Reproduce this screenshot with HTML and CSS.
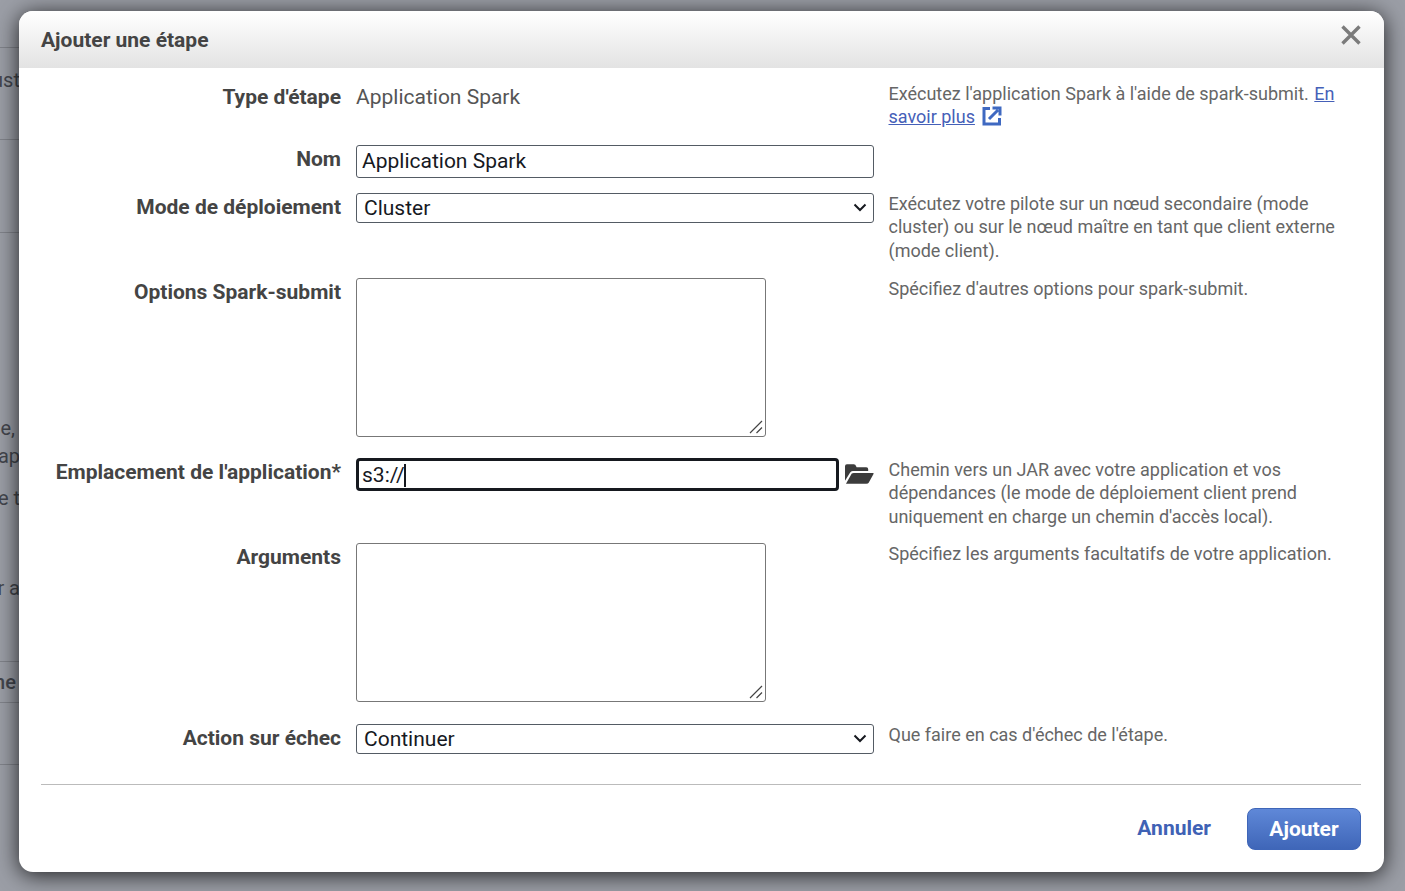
FILE: index.html
```html
<!DOCTYPE html>
<html lang="fr">

<head>
    <meta charset="UTF-8">
    <title>Ajouter une étape</title>
    <link rel="stylesheet" href="styles.css">
</head>

<body>

    <div class="backdrop">
        <div class="bg-row bg-a"></div>
        <div class="bg-row bg-b"><span class="bg-text bg-ust">clust</span></div>
        <div class="bg-row bg-c"></div>
        <div class="bg-row bg-d">
            <span class="bg-text bg-e">une,</span>
            <span class="bg-text bg-ap">d'ap</span>
            <span class="bg-text bg-t">de t</span>
            <span class="bg-text bg-ra">pour a</span>
        </div>
        <div class="bg-row bg-f"><span class="bg-text bg-ne">Nome</span></div>
        <div class="bg-row bg-g"></div>
    </div>

    <div class="modal">
        <div class="modal-header">
            <h2>Ajouter une étape</h2>
            <svg class="close" viewBox="0 0 20 20" width="20" height="20">
                <path d="M1.500 1.500 L18.500 18.500 M18.500 1.500 L1.500 18.500" stroke="#7b7b7b" stroke-width="3.400" fill="none" />
            </svg>
        </div>

        <div class="modal-body">
            <div class="form-row row-type">
                <label>Type d'étape</label>
                <div class="control static">Application Spark</div>
                <p class="help">Exécutez l'application Spark à l'aide de spark-submit. <a href="#">En savoir plus</a>
                    <svg class="ext" viewBox="0 0 20 20" width="20" height="20">
                        <path d="M8 2.500 H2 V18 H17.500 V12" stroke="#3f69c1" stroke-width="3" fill="none" />
                        <path d="M7 13 L16 4 M10.500 2 H18 V9.500" stroke="#3f69c1" stroke-width="3" fill="none" />
                    </svg>
                </p>
            </div>

            <div class="form-row row-name">
                <label>Nom</label>
                <div class="control"><input class="text-input" type="text" value="Application Spark"></div>
                <p class="help"></p>
            </div>

            <div class="form-row row-mode">
                <label>Mode de déploiement</label>
                <div class="control select-wrap">
                    <select class="select-input"><option>Cluster</option></select>
                    <svg class="chevron" viewBox="0 0 14 9" width="14" height="9">
                        <path d="M1.500 1.500 L7 7 L12.500 1.500" stroke="#16191f" stroke-width="2" fill="none" />
                    </svg>
                </div>
                <p class="help">Exécutez votre pilote sur un nœud secondaire (mode cluster) ou sur le nœud maître en tant que client externe (mode client).</p>
            </div>

            <div class="form-row row-options">
                <label>Options Spark-submit</label>
                <div class="control area-wrap">
                    <textarea class="area"></textarea>
                    <svg class="grip" viewBox="0 0 14 14" width="14" height="14">
                        <path d="M1 13 L13 1 M7.500 13 L13 7.500" stroke="#444" stroke-width="1.200" fill="none" />
                    </svg>
                </div>
                <p class="help">Spécifiez d'autres options pour spark-submit.</p>
            </div>

            <div class="form-row row-location">
                <label>Emplacement de l'application*</label>
                <div class="control location">
                    <div class="focused">s3://<span class="caret"></span></div>
                    <svg class="folder" viewBox="0 0 30 22" width="30" height="22">
                        <path d="M0 18 V3 Q0 1 2 1 H9 Q11 1 11.500 3 L12 4 H22 Q24 4 24 6 V8 H8 Q6 8 5 10 Z" fill="#3c3c3c" />
                        <path d="M1 21 L7 10.500 Q7.500 10 9 10 H29 Q30 10 29.500 11 L24.500 20 Q24 21 22 21 Z" fill="#3c3c3c" />
                    </svg>
                </div>
                <p class="help">Chemin vers un JAR avec votre application et vos dépendances (le mode de déploiement client prend uniquement en charge un chemin d'accès local).</p>
            </div>

            <div class="form-row row-args">
                <label>Arguments</label>
                <div class="control area-wrap">
                    <textarea class="area"></textarea>
                    <svg class="grip" viewBox="0 0 14 14" width="14" height="14">
                        <path d="M1 13 L13 1 M7.500 13 L13 7.500" stroke="#444" stroke-width="1.200" fill="none" />
                    </svg>
                </div>
                <p class="help">Spécifiez les arguments facultatifs de votre application.</p>
            </div>

            <div class="form-row row-action">
                <label>Action sur échec</label>
                <div class="control select-wrap">
                    <select class="select-input"><option>Continuer</option></select>
                    <svg class="chevron" viewBox="0 0 14 9" width="14" height="9">
                        <path d="M1.500 1.500 L7 7 L12.500 1.500" stroke="#16191f" stroke-width="2" fill="none" />
                    </svg>
                </div>
                <p class="help">Que faire en cas d'échec de l'étape.</p>
            </div>
        </div>

        <div class="modal-footer">
            <a class="cancel" href="#">Annuler</a>
            <button class="add">Ajouter</button>
        </div>
    </div>

</body>

</html>
```

FILE: styles.css
```css
* {
    box-sizing: border-box;
}

html,
body {
    margin: 0;
    height: 100%;
    overflow: hidden;
}

body {
    font-family: Roboto, sans-serif;
    background-color: #9b9ea6;
    color: #444;
}

/* page behind the dialog */
.backdrop {
    width: 19px;
    height: 891px;
    overflow: hidden;
    color: #43464d;
    font-size: 20px;
}

.bg-row {
    border-bottom: 1px solid #80838a;
    position: relative;
}

.bg-a {
    height: 48px;
}

.bg-b {
    height: 92px;
}

.bg-c {
    height: 93px;
}

.bg-d {
    height: 429px;
}

.bg-f {
    height: 41px;
}

.bg-g {
    height: 62px;
}

.bg-text {
    position: absolute;
    right: -1px;
    white-space: nowrap;
    line-height: 24px;
}

.bg-ust {
    top: 20px;
    right: -1px;
}

.bg-e {
    top: 183px;
    right: 4px;
}

.bg-ap {
    top: 211px;
}

.bg-t {
    top: 253px;
}

.bg-ra {
    top: 343px;
}

.bg-ne {
    top: 8px;
    right: 3px;
    font-weight: 500;
}

/* dialog */
.modal {
    position: absolute;
    left: 19px;
    top: 11px;
    width: 1365px;
    height: 861px;
    background-color: #fff;
    border-radius: 14px;
    box-shadow: 0 3px 22px rgba(0, 0, 0, 0.8);
    overflow: hidden;
}

.modal-header {
    height: 57px;
    padding: 0 22px;
    display: flex;
    align-items: center;
    justify-content: space-between;
    background: linear-gradient(#fff, #e3e3e3);
}

.modal-header h2 {
    margin: 0;
    padding-top: 1px;
    font-size: 21px;
    font-weight: 700;
    color: #444;
}

.close {
    margin: -9px 1px 0 0;
}

.modal-body {
    padding: 0 22px;
}

.form-row {
    display: grid;
    grid-template-columns: 300px 518px 1fr;
    column-gap: 15px;
}

.form-row label {
    font-size: 21px;
    font-weight: 700;
    line-height: 24px;
    text-align: right;
    color: #444;
    padding-top: 2px;
}

.control {
    font-size: 21px;
}

.static {
    line-height: 24px;
    padding-top: 4px;
    color: #555;
}

.help {
    margin: -1.250px 0 0 -0.5px;
    font-size: 18px;
    line-height: 23.500px;
    color: #666;
}

.help a {
    color: #4560b8;
    margin-left: 1px;
}

.ext {
    vertical-align: -3px;
    margin-left: 3px;
}

.row-type {
    height: 77px;
    padding-top: 13px;
}

.row-type label {
    padding-top: 4px;
}

.row-type .help {
    margin-top: 1px;
    line-height: 23px;
}

.row-name {
    height: 48px;
}

.row-mode {
    height: 85px;
}

.row-options {
    height: 180px;
}

.row-location {
    height: 85px;
}

.row-location .help {
    margin-top: -0.250px;
}

.row-args {
    height: 181px;
}

.row-action {
    height: 60px;
}

.text-input,
.select-input {
    display: block;
    width: 518px;
    font-family: Roboto, sans-serif;
    font-size: 21px;
    color: #16191f;
    background-color: #fff;
    border: 1px solid #545b64;
    border-radius: 3px;
}

.text-input {
    height: 33px;
    padding: 0 5px 2px;
}

.select-input {
    height: 30px;
    padding: 0 7px;
    appearance: none;
}

.select-wrap,
.area-wrap {
    position: relative;
}

.chevron {
    position: absolute;
    right: 7px;
    top: 10px;
}

.area {
    display: block;
    width: 410px;
    height: 159px;
    background-color: #fff;
    border: 1px solid #777;
    border-radius: 3px;
    resize: none;
}

.grip {
    position: absolute;
    left: 393px;
    top: 142px;
}

.location {
    display: flex;
    align-items: flex-start;
    gap: 6px;
}

.focused {
    flex: none;
    width: 483px;
    height: 33px;
    padding: 0 3px;
    border: 3px solid #16191f;
    border-radius: 4px;
    line-height: 28px;
    color: #16191f;
}

.caret {
    display: inline-block;
    width: 2px;
    height: 23px;
    margin-left: -1px;
    vertical-align: -5px;
    background-color: #16191f;
}

.folder {
    flex: none;
    margin-top: 5px;
    width: 29px;
}

.modal-footer {
    margin: 0 23px 0 22px;
    padding-top: 23px;
    border-top: 1px solid #bbb;
    display: flex;
    justify-content: flex-end;
    align-items: center;
    gap: 36px;
}

.cancel {
    font-size: 21px;
    font-weight: 700;
    color: #3f62b5;
    text-decoration: none;
    margin-bottom: 2px;
}

.add {
    width: 114px;
    height: 42px;
    font-family: Roboto, sans-serif;
    font-size: 21px;
    font-weight: 700;
    color: #fff;
    background: linear-gradient(#5f88d8, #3f66b8);
    border: 1px solid #3f66b8;
    border-radius: 8px;
}
```
